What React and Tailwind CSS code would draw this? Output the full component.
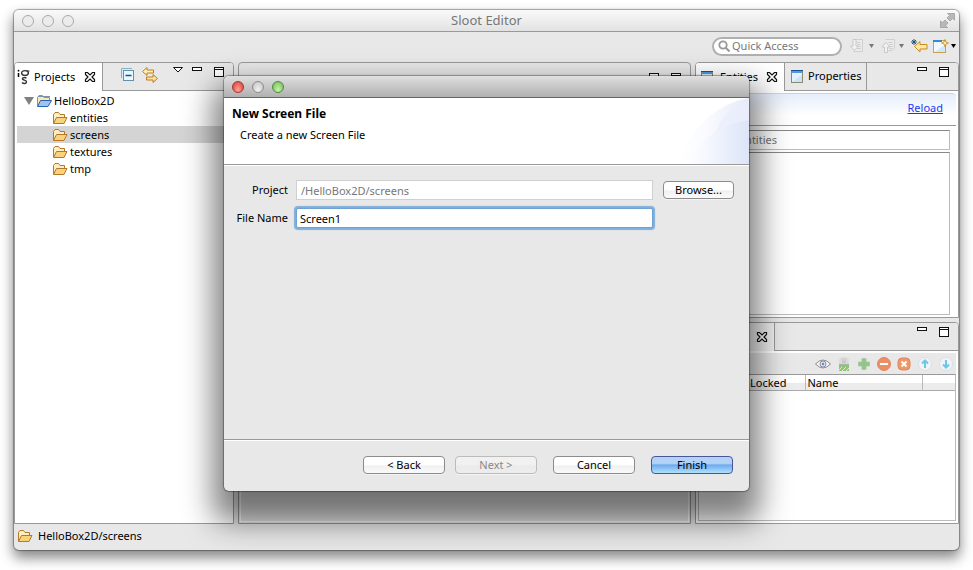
import React from "react";

function FolderIcon({ open = "#f9d27c", back = "#fdf0c0", line = "#b5772a" }) {
  return (
    <svg width="16" height="14" viewBox="0 0 16 14" className="shrink-0" aria-hidden="true">
      <path d="M1.500 12V3.500L3 1.500h3.500L8 3.500h4.500V6" fill={back} stroke={line} strokeLinejoin="round" />
      <path d="M1.500 12.500 4.500 6.500H15L12 12.500Z" fill={open} stroke={line} strokeLinejoin="round" />
    </svg>
  );
}

function ProjectIcon() {
  return (
    <svg width="16" height="14" viewBox="0 0 16 14" className="shrink-0" aria-hidden="true">
      <path d="M1.500 12V3.500L3 1.500h3.500L8 3.500h5.500V7" fill="#fbe9ae" stroke="#c08a3a" />
      <path d="M2 2.500h12" stroke="#7d93ad" />
      <path d="M1.500 12.500 4.500 6.500H15.500L12 12.500Z" fill="#9cc4f5" stroke="#2f62ae" strokeLinejoin="round" />
    </svg>
  );
}

function CloseIcon() {
  return (
    <svg width="12" height="12" viewBox="0 0 12 12" aria-hidden="true">
      <path
        d="M1.500 1.500h2l2.500 2.500 2.500-2.500h2v2L8 6l2.500 2.500v2h-2L6 8l-2.500 2.500h-2v-2L4 6 1.500 3.500Z"
        fill="#fff"
        stroke="#111"
        strokeWidth="1.200"
      />
    </svg>
  );
}

function MinimizeIcon() {
  return (
    <svg width="10" height="12" viewBox="0 0 10 12" aria-hidden="true">
      <rect x="0.500" y="0.500" width="9" height="3" fill="#fff" stroke="#111" />
    </svg>
  );
}

function MaximizeIcon() {
  return (
    <svg width="10" height="12" viewBox="0 0 10 12" aria-hidden="true">
      <rect x="0.500" y="0.500" width="9" height="9" fill="#fff" stroke="#111" />
      <path d="M0 2.500h10" stroke="#111" />
    </svg>
  );
}

function ViewIcon() {
  return (
    <svg width="12" height="13" viewBox="0 0 12 13" className="shrink-0" aria-hidden="true">
      <rect x="0.500" y="0.500" width="11" height="12" fill="#e3f2fc" stroke="#8a8a72" />
      <rect x="1" y="1" width="10" height="2" fill="#4f9be0" />
      <path d="M0 0.500h12" stroke="#1c4e94" />
      <path d="M1 12 11 5v7Z" fill="#c6e5f8" />
    </svg>
  );
}

function HierarchyIcon() {
  return (
    <svg width="13" height="16" viewBox="0 0 13 16" className="shrink-0" aria-hidden="true">
      <path d="M1.500 4v4" stroke="#000" strokeWidth="1.500" />
      <circle cx="1.500" cy="1.700" r="0.900" />
      <ellipse cx="8" cy="4" rx="3.400" ry="2.400" fill="none" stroke="#333" strokeWidth="1.400" />
      <path d="M9.500 2h3" stroke="#333" />
      <path d="M9.500 9.200C8 8 5.200 8.500 5.500 10c.3 1.400 4 1 4 2.800 0 2-3 2.200-4.500.7" fill="none" stroke="#333" strokeWidth="1.400" />
    </svg>
  );
}

function CollapseIcon() {
  return (
    <svg width="14" height="14" viewBox="0 0 14 14" aria-hidden="true">
      <path d="M0.500 10V0.500H11" fill="none" stroke="#86b1c9" />
      <rect x="1" y="1" width="10" height="9" fill="#d5ebf7" />
      <rect x="2.500" y="2.500" width="10" height="10" fill="#e9f7ff" stroke="#648fa9" />
      <path d="M4.500 7.500h6" stroke="#174f91" strokeWidth="1.500" />
    </svg>
  );
}

function LinkIcon() {
  return (
    <svg width="16" height="16" viewBox="0 0 16 16" aria-hidden="true">
      <path d="M0.500 4.500 5 0.500v2.500h6.500v3H5v2.500Z" fill="#fff0b8" stroke="#c47b1e" />
      <path d="M15.500 11.500 11 7.500V10H4.500v3H11v2.500Z" fill="#ffe395" stroke="#c47b1e" />
    </svg>
  );
}

function FileArrowIcon({ up }) {
  return (
    <svg width="16" height="16" viewBox="0 0 16 16" className="shrink-0" aria-hidden="true">
      <path d={up ? "M4.500 1.500h9v9l-2 2h-5" : "M7 1.500h6.500v12h-9"} fill="#ebebeb" stroke="#d0d0d0" />
      <path d="M7.500 4.500h4M8.500 6.500h3M9 8.500h3M8 10.500h4" stroke="#cfcfcf" />
      {up ? (
        <path d="M5 4.500 9 9H6.500v5.500h-3V9H1Z" fill="#f2f2f2" stroke="#c8c8c8" />
      ) : (
        <path d="M5.500 12.500 1.500 8H4V1.500h3V8h2.500Z" fill="#f2f2f2" stroke="#c8c8c8" />
      )}
    </svg>
  );
}

function DropTriangle({ color = "#777" }) {
  return (
    <svg width="5" height="4" viewBox="0 0 5 4" className="shrink-0" aria-hidden="true">
      <path d="M0 0h5L2.500 4Z" fill={color} />
    </svg>
  );
}

function BackStarIcon() {
  return (
    <svg width="17" height="14" viewBox="0 0 17 14" aria-hidden="true">
      <path d="M3.500 7.500 9 2.500v3h7v4.500H9v3Z" fill="#fde9a6" stroke="#c98a20" />
      <path d="M3 0v6M0 3h6M1 1l4 4M5 1 1 5" stroke="#1d4975" strokeWidth="0.900" />
    </svg>
  );
}

function OpenPerspectiveIcon() {
  return (
    <svg width="16" height="14" viewBox="0 0 16 14" aria-hidden="true">
      <rect x="0.500" y="1.500" width="12" height="12" fill="#eff8ff" stroke="#c9a050" />
      <rect x="0" y="1" width="9" height="2" fill="#3b86cf" />
      <path d="M1.500 13 12 6v7Z" fill="#cfe8f9" />
      <path d="M12 0.500 13 3l2.500 1L13 5 12 8 11 5 8.500 4 11 3Z" fill="#ffe9a0" stroke="#c68b22" strokeWidth="0.800" />
    </svg>
  );
}

function ExpandIcon() {
  return (
    <svg width="15" height="15" viewBox="0 0 15 15" aria-hidden="true">
      <path d="M7.500 0.500h7V7l-2-1.500L10 8 7 5 9.500 2.500Z" fill="#b8b8b8" stroke="#969696" strokeWidth="0.700" />
      <path d="M0.500 8v6.500h7l-2-2L8 10 5 7 2.500 9.500Z" fill="#b8b8b8" stroke="#969696" strokeWidth="0.700" />
    </svg>
  );
}

function EyeIcon() {
  return (
    <svg width="16" height="10" viewBox="0 0 16 10" aria-hidden="true">
      <path d="M0.500 5Q8-3 15.500 5 8 13 0.500 5Z" fill="#f6f6f6" stroke="#8b8b8b" />
      <circle cx="8" cy="5" r="3" fill="#dfe2f6" stroke="#8c8c9c" />
      <circle cx="8" cy="5" r="1.200" fill="#6f82cc" />
    </svg>
  );
}

function LockIcon() {
  return (
    <svg width="10" height="14" viewBox="0 0 10 14" aria-hidden="true">
      <path d="M1 7V2.500L2.500 1h5L9 2.500V7Z" fill="#e2e2e2" stroke="#cfcfcf" />
      <path d="M3 3h1.500M5.500 3H7M3 5h4" stroke="#aaa" />
      <rect x="0" y="7" width="10" height="7" fill="#8fc47e" />
      <path d="M0 7.500h10" stroke="#a8b8a0" />
      <path d="m0 13 3-3M3 14l4-4M7 14l3-3" stroke="#d8ecc0" />
    </svg>
  );
}

function PlusIcon() {
  return (
    <svg width="12" height="12" viewBox="0 0 12 12" aria-hidden="true">
      <path d="M4 0.500h4V4h3.500v4H8v3.500H4V8H0.500V4H4Z" fill="#93c389" stroke="#a9c9a2" />
    </svg>
  );
}

function RoundIcon({ fill, stroke, d, mark = "#fff" }) {
  return (
    <svg width="14" height="14" viewBox="0 0 14 14" aria-hidden="true">
      <circle cx="7" cy="7" r="6.500" fill={fill} stroke={stroke} />
      <path d={d} stroke={mark} strokeWidth="2" fill="none" />
    </svg>
  );
}

function SquareDeleteIcon() {
  return (
    <svg width="14" height="14" viewBox="0 0 14 14" aria-hidden="true">
      <rect x="1" y="1" width="12" height="12" rx="4" fill="#ec9a62" stroke="#e58368" />
      <path d="m4.500 4.500 5 5m0-5-5 5" stroke="#fff" strokeWidth="2" />
    </svg>
  );
}

function IconButton({ label, children, disabled }) {
  return (
    <button type="button" aria-label={label} disabled={disabled} className="flex shrink-0 items-center justify-center">
      {children}
    </button>
  );
}

function PaneControls() {
  return (
    <div className="flex gap-3 pt-1">
      <IconButton label="Minimize">
        <MinimizeIcon />
      </IconButton>
      <IconButton label="Maximize">
        <MaximizeIcon />
      </IconButton>
    </div>
  );
}

function PaneHeader({ children, controls }) {
  return (
    <div className="flex h-7 shrink-0 items-stretch bg-[#e8e8e8]">
      {children}
      <div className="flex flex-1 items-start justify-end border-b border-[#999] pr-[9px]">{controls}</div>
    </div>
  );
}

function PushButton({ children, className = "", ...rest }) {
  return (
    <button
      type="button"
      className={
        "h-[18px] rounded border border-[#8c8c8c] bg-linear-to-b from-white from-50% via-[#f0f0f0] via-55% to-[#fafafa] leading-4 text-black shadow-[0_1px_0_#fff8] disabled:border-[#bbb] disabled:from-[#f1f1f1] disabled:via-[#eaeaea] disabled:to-[#eee] disabled:text-[#888] " +
        className
      }
      {...rest}
    >
      {children}
    </button>
  );
}

function ProjectsPane() {
  const folders = ["entities", "screens", "textures", "tmp"];
  return (
    <section className="flex w-[220px] shrink-0 flex-col overflow-hidden rounded-t border border-[#999] bg-white">
      <PaneHeader
        controls={
          <div className="flex gap-3 pt-1">
            <div className="flex gap-[7px]">
              <IconButton label="Collapse All">
                <CollapseIcon />
              </IconButton>
              <IconButton label="Link with Editor">
                <LinkIcon />
              </IconButton>
            </div>
            <div className="flex items-start gap-[9px] pl-[3px]">
              <IconButton label="View Menu">
                <svg width="10" height="6" viewBox="0 0 10 6" aria-hidden="true">
                  <path d="M0.500 0.500h9L5 5Z" fill="#fff" stroke="#111" />
                </svg>
              </IconButton>
              <IconButton label="Minimize">
                <MinimizeIcon />
              </IconButton>
            </div>
            <div className="flex items-start">
              <IconButton label="Maximize">
                <MaximizeIcon />
              </IconButton>
            </div>
          </div>
        }
      >
        <div className="flex w-[88px] items-center gap-1 border-r border-[#999] bg-white pl-0.5">
          <HierarchyIcon />
          <span className="flex-1">Projects</span>
          <span className="pr-1.5">
            <IconButton label="Close Projects">
              <CloseIcon />
            </IconButton>
          </span>
        </div>
      </PaneHeader>
      <ul className="flex-1 py-px pr-px pl-0.5 leading-4">
        <li>
          <div className="flex h-[17px] items-center gap-0.5 pl-[7px]">
            <svg width="10" height="8" viewBox="0 0 10 8" aria-hidden="true">
              <path d="M0 0h10L5 8Z" fill="#808080" />
            </svg>
            <ProjectIcon />
            <span>HelloBox2D</span>
          </div>
          <ul>
            {folders.map((name) => (
              <li
                key={name}
                className={"flex h-[17px] items-center gap-0.5 pl-[35px] " + (name === "screens" ? "bg-[#d4d4d4]" : "")}
              >
                <FolderIcon />
                <span>{name}</span>
              </li>
            ))}
          </ul>
        </li>
      </ul>
    </section>
  );
}

function EditorPane() {
  return (
    <section className="flex flex-1 flex-col rounded-t border border-[#999] bg-[#e8e8e8]">
      <div className="flex h-7 justify-end pr-[9px]">
        <PaneControls />
      </div>
      <div className="mx-px mb-px flex-1 border-r border-b border-l border-white bg-[#e4e4e4]" />
    </section>
  );
}

function EntitiesPane() {
  return (
    <section className="flex flex-[256] flex-col overflow-hidden rounded-t border border-[#999] bg-white">
      <PaneHeader controls={<PaneControls />}>
        <div className="flex w-[89px] items-center gap-[7px] border-r border-[#999] bg-white pl-[5px]">
          <ViewIcon />
          <span className="flex-1">Entities</span>
          <span className="pr-1.5">
            <IconButton label="Close Entities">
              <CloseIcon />
            </IconButton>
          </span>
        </div>
        <div className="flex w-[82px] items-center gap-[5px] border-r border-b border-[#999] pl-1.5">
          <ViewIcon />
          <span>Properties</span>
        </div>
      </PaneHeader>
      <div className="mx-0.5 mt-0.5 flex h-[33px] justify-end rounded-t border-t border-b border-t-[#c3d5ee] border-b-[#999] bg-linear-to-b from-[#e6eefb] to-white to-70% pt-1.5 pr-[13px]">
        <a href="#reload" className="leading-4 text-[#1c39f0] underline">
          Reload
        </a>
      </div>
      <div className="flex flex-1 flex-col gap-0.5 px-2 pt-1 pb-0.5">
        <input
          type="text"
          aria-label="Filter entities"
          placeholder="Filter Entities"
          className="h-5 w-full border border-[#bbb] border-t-[#888] bg-white px-[5px] pb-0.5 placeholder:text-[#777] placeholder:opacity-100"
        />
        <div className="flex-1 border border-[#bbb] border-t-[#888]" />
      </div>
    </section>
  );
}

function LayersPane() {
  return (
    <section className="flex flex-[202] flex-col overflow-hidden rounded-t border border-[#999] bg-white">
      <PaneHeader controls={<PaneControls />}>
        <div className="flex w-[79px] items-center justify-end border-r border-[#999] bg-[#f0f0f0] pr-1.5">
          <IconButton label="Close view">
            <CloseIcon />
          </IconButton>
        </div>
      </PaneHeader>
      <div className="mx-0.5 mt-0.5 flex h-[21px] shrink-0 items-center justify-end bg-[#e8e8e8] pt-0.5">
        <div className="grid grid-cols-[22px_20px_20px_20px_20px_21px_21px] place-items-center">
          <IconButton label="Toggle visibility">
            <EyeIcon />
          </IconButton>
          <IconButton label="Toggle lock">
            <LockIcon />
          </IconButton>
          <IconButton label="Add">
            <PlusIcon />
          </IconButton>
          <IconButton label="Remove">
            <RoundIcon fill="#ec8f62" stroke="#e58368" d="M3 7h8" />
          </IconButton>
          <IconButton label="Delete">
            <SquareDeleteIcon />
          </IconButton>
          <IconButton label="Move up">
            <RoundIcon fill="#f1f4f6" stroke="#dcdfe2" mark="#6cc7e8" d="M7 11V4M4 6.500l3-3 3 3" />
          </IconButton>
          <IconButton label="Move down">
            <RoundIcon fill="#f1f4f6" stroke="#dcdfe2" mark="#6cc7e8" d="M7 3v7M4 7.500l3 3 3-3" />
          </IconButton>
        </div>
      </div>
      <div className="mx-0.5 mb-0.5 flex-1 border border-[#bbb] border-t-[#999]">
        <table className="w-full table-fixed border-collapse">
          <thead>
            <tr className="h-4 border-b border-[#aaa] bg-linear-to-b from-white from-50% to-[#ececec] to-55% text-left leading-[14px]">
              <th scope="col" className="w-[50px] p-0" />
              <th scope="col" className="w-[56px] border-r border-[#bbb] p-0 pl-px font-normal">
                Locked
              </th>
              <th scope="col" className="border-r border-[#bbb] p-0 pl-0.5 font-normal">
                Name
              </th>
              <th scope="col" className="w-[33px] p-0" />
            </tr>
          </thead>
          <tbody />
        </table>
      </div>
    </section>
  );
}

function Toolbar() {
  return (
    <div className="flex h-[30px] items-center justify-end gap-[7px] bg-[#e8e8e8] pr-[3px] pb-0.5">
      <label className="flex h-[19px] w-[130px] items-center gap-0.5 rounded-full border-2 border-[#b0b0b0] bg-white pl-1">
        <svg width="12" height="12" viewBox="0 0 12 12" className="shrink-0" aria-hidden="true">
          <circle cx="5" cy="5" r="3.700" fill="none" stroke="#999" strokeWidth="1.800" />
          <path d="m7.500 7.500 4 4" stroke="#999" strokeWidth="2" />
        </svg>
        <input
          type="search"
          aria-label="Quick Access"
          placeholder="Quick Access"
          className="w-full min-w-0 bg-transparent placeholder:text-[#777] placeholder:opacity-100"
        />
      </label>
      <button type="button" aria-label="Next annotation" disabled className="flex items-center gap-1">
        <FileArrowIcon />
        <DropTriangle />
      </button>
      <button type="button" aria-label="Previous annotation" disabled className="flex items-center gap-0.5">
        <FileArrowIcon up />
        <DropTriangle />
      </button>
      <div className="flex gap-[5px]">
        <IconButton label="Last edit location">
          <BackStarIcon />
        </IconButton>
        <button type="button" aria-label="Open perspective" className="flex items-center gap-0.5">
          <OpenPerspectiveIcon />
          <DropTriangle color="#000" />
        </button>
      </div>
    </div>
  );
}

function NewScreenDialog() {
  return (
    <div
      role="dialog"
      aria-labelledby="wizard-title"
      className="flex w-[525px] flex-col overflow-hidden rounded-[5px] bg-[#e8e8e8] shadow-[0_0_1px_1px_#0005,0_20px_30px_11px_#00000080]"
    >
      <div className="flex h-[22px] items-center gap-2 border-b border-[#666] bg-linear-to-b from-[#e0e0e0] to-[#b0b0b0] pl-2">
        <button type="button" aria-label="Close" className="size-3 rounded-full border border-[#a3332c] bg-radial-[at_50%_80%] from-[#ffa196] to-[#d63b35]" />
        <button type="button" aria-label="Minimize" disabled className="size-3 rounded-full border border-[#8c8c8c] bg-radial-[at_50%_80%] from-[#f2f2f2] to-[#bdbdbd]" />
        <button type="button" aria-label="Zoom" className="size-3 rounded-full border border-[#4c8a3a] bg-radial-[at_50%_80%] from-[#c8f3a8] to-[#6cb853]" />
      </div>
      <div className="flex h-[67px] justify-between border-b border-[#999] bg-white">
        <div className="flex flex-col gap-[5px] pt-2 pl-2">
          <h1 id="wizard-title" className="text-xs leading-4 font-bold">
            New Screen File
          </h1>
          <p className="pl-2 leading-4">Create a new Screen File</p>
        </div>
        <svg width="76" height="66" viewBox="0 0 76 66" aria-hidden="true">
          <defs>
            <linearGradient id="outer" x1="0" x2="1">
              <stop offset="0" stopColor="#fff" />
              <stop offset="0.400" stopColor="#fafbff" />
              <stop offset="1" stopColor="#e6ebfa" />
            </linearGradient>
            <linearGradient id="inner" x1="0" x2="1">
              <stop offset="0" stopColor="#fff" />
              <stop offset="0.400" stopColor="#f3f6fe" />
              <stop offset="1" stopColor="#dce4f7" />
            </linearGradient>
          </defs>
          <path d="M4 66Q28 8 76 0V66Z" fill="url(#outer)" />
          <path d="M42 37Q50 10 76 2V22Q57 26 42 37Z" fill="#e9eefb" opacity="0.700" />
          <path d="M12 66Q34 28 76 22V66Z" fill="url(#inner)" />
        </svg>
      </div>
      <form className="flex flex-col" onSubmit={(e) => e.preventDefault()}>
        <div className="grid h-[274px] grid-cols-[64px_1fr_71px] content-start items-center gap-2 border-t border-white pt-3.5 pr-[15px]">
          <label htmlFor="project" className="text-right">
            Project
          </label>
          <input
            id="project"
            type="text"
            readOnly
            value="/HelloBox2D/screens"
            className="mr-0.5 h-5 min-w-0 border border-[#d0d0d0] bg-white px-1 text-[#777] outline-none"
          />
          <PushButton>Browse...</PushButton>
          <label htmlFor="file-name" className="text-right whitespace-nowrap">
            File Name
          </label>
          <input
            id="file-name"
            type="text"
            defaultValue="Screen1"
            className="mr-0.5 h-5 min-w-0 rounded-xs border border-[#6fa3d4] bg-white px-[3px] text-black shadow-[0_0_1px_2px_#7eaedb] outline-none"
          />
        </div>
        <div className="flex justify-end gap-4 border-t border-[#999] pt-4 pr-4 pb-[17px] shadow-[inset_0_1px_0_#fff]">
          <div className="flex gap-2.5">
            <PushButton className="w-[82px]">&lt; Back</PushButton>
            <PushButton className="w-[82px]" disabled>
              Next &gt;
            </PushButton>
          </div>
          <PushButton className="w-[82px]">Cancel</PushButton>
          <button
            type="submit"
            className="h-[18px] w-[82px] rounded border border-[#4a55a0] bg-linear-to-b from-[#b4d2f5] from-40% via-[#6eaaee] via-50% to-[#b0e0fb] leading-4"
          >
            Finish
          </button>
        </div>
      </form>
    </div>
  );
}

export default function App() {
  return (
    <main className="flex min-h-screen flex-col overflow-hidden bg-white pt-2.5 pr-3.5 pb-5 pl-3.5 font-['Noto_Sans','Lucida_Grande',sans-serif] text-[11px] text-black">
      <div className="relative flex flex-1 flex-col rounded-[5px] bg-[#e8e8e8] shadow-[0_0_1px_1px_#0005,0_7px_13px_1px_#0007]">
        <header className="flex h-[22px] items-center justify-between rounded-t-[5px] border-b border-[#999] bg-linear-to-b from-[#fafafa] to-[#e2e2e2] pr-1 pl-2">
          <div className="flex w-13 gap-2">
            {["Close", "Minimize", "Zoom"].map((label) => (
              <button
                key={label}
                type="button"
                aria-label={label + " window"}
                className="size-3 rounded-full border border-[#aaa] bg-[#ececec]"
              />
            ))}
          </div>
          <span className="text-[13px] text-[#777]">Sloot Editor</span>
          <div className="flex w-14 justify-end">
            <IconButton label="Full screen">
              <ExpandIcon />
            </IconButton>
          </div>
        </header>
        <Toolbar />
        <div className="flex flex-1 gap-1">
          <ProjectsPane />
          <EditorPane />
          <div className="flex w-[264px] shrink-0 flex-col gap-1">
            <EntitiesPane />
            <LayersPane />
          </div>
        </div>
        <footer className="flex h-[26px] items-center gap-[5px] overflow-hidden rounded-b-[5px] pb-0.5 pl-[3px]">
          <FolderIcon />
          <span>HelloBox2D/screens</span>
        </footer>
        <div className="absolute inset-0 flex items-start justify-center overflow-hidden rounded-b-[5px] pt-[66px]">
          <NewScreenDialog />
        </div>
      </div>
    </main>
  );
}
